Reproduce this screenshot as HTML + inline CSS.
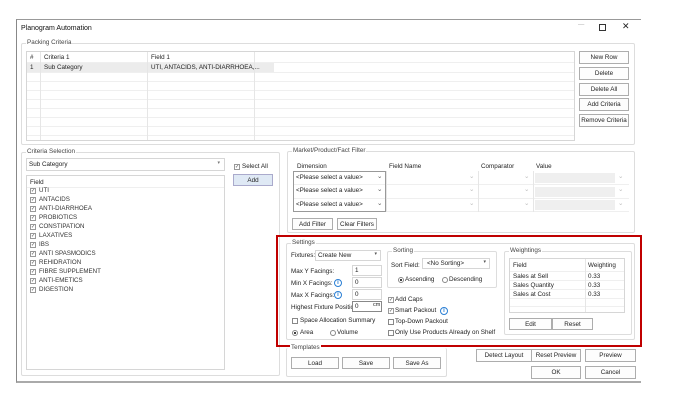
<!DOCTYPE html>
<html><head><style>
*{margin:0;padding:0;box-sizing:border-box}
body{width:675px;height:403px;background:#fff;position:relative;overflow:hidden;font-family:"Liberation Sans",sans-serif;font-size:6.3px;color:#222}
div,span{position:absolute}
.win{left:16px;top:19px;width:625px;height:364px;border-left:1px solid #888;border-top:1px solid #999;border-bottom:2px solid #aaa;background:#fff}
.grp{border:1px solid #ddd;border-radius:2px}
.lg{background:#fff;padding:0 1px;color:#444;top:-5px;left:4px;white-space:nowrap}
.btn{border:1px solid #adadad;background:#fdfdfd;text-align:center;line-height:11px;white-space:nowrap}
.box{border:1px solid #d6d6d6;background:#fff}
.hl{left:0;right:0;height:1px;background:#efefef}
.vl{top:0;bottom:0;width:1px;background:#e6e6e6}
.cb{width:6px;height:6px;border:1px solid #888;background:#fff}
.ck{width:6px;height:6px;border:1px solid #999;background:#fff;font-size:5px;line-height:4px;text-align:center;color:#444}
.rd{width:6px;height:6px;border:1px solid #888;border-radius:50%;background:#fff}
.i{width:8px;height:8px;border:1px solid #2a7fd4;border-radius:50%;color:#2a7fd4;font-size:6px;text-align:center;line-height:6px;font-weight:bold}
.t{white-space:nowrap}
</style></head><body>
<div class="win"></div>
<span class="t" style="left:21px;top:25px;font-size:7px;color:#111">Planogram Automation</span>
<span class="t" style="left:578px;top:21px;color:#aaa">—</span>
<div style="left:599px;top:24px;width:7px;height:7px;border:1px solid #333"></div>
<span class="t" style="left:622px;top:21px;font-size:9px">✕</span>

<!-- Packing criteria -->
<div class="grp" style="left:21px;top:43px;width:614px;height:102px"><span class="lg">Packing Criteria</span></div>
<div class="box" style="left:26px;top:51px;width:549px;height:90px">
 <div class="hl" style="top:10px"></div><div style="left:0;top:11px;width:247px;height:9px;background:#ececec"></div>
 <div class="hl" style="top:20px"></div><div class="hl" style="top:29px"></div><div class="hl" style="top:38px"></div><div class="hl" style="top:47px"></div><div class="hl" style="top:56px"></div><div class="hl" style="top:65px"></div><div class="hl" style="top:74px"></div><div class="hl" style="top:83px"></div>
 <div class="vl" style="left:13px"></div><div class="vl" style="left:120px"></div><div class="vl" style="left:227px"></div>
 <span class="t" style="left:3px;top:2px">#</span><span class="t" style="left:17px;top:2px">Criteria 1</span><span class="t" style="left:124px;top:2px">Field 1</span>
 <span class="t" style="left:3px;top:12px">1</span><span class="t" style="left:17px;top:12px">Sub Category</span><span class="t" style="left:124px;top:12px">UTI, ANTACIDS, ANTI-DIARRHOEA,...</span>
</div>
<div class="btn" style="left:579px;top:51px;width:50px;height:13px">New Row</div>
<div class="btn" style="left:579px;top:67px;width:50px;height:13px">Delete</div>
<div class="btn" style="left:579px;top:83px;width:50px;height:13px">Delete All</div>
<div class="btn" style="left:579px;top:98px;width:50px;height:13px">Add Criteria</div>
<div class="btn" style="left:579px;top:114px;width:50px;height:13px">Remove Criteria</div>

<!-- Criteria selection -->
<div class="grp" style="left:21px;top:152px;width:259px;height:224px"><span class="lg">Criteria Selection</span></div>
<div class="box" style="left:26px;top:158px;width:199px;height:13px"><span class="t" style="left:2px;top:2px">Sub Category</span><span style="right:4px;top:1px;color:#777;font-size:5px">▾</span></div>
<div class="ck" style="left:234px;top:164px">✓</div><span class="t" style="left:242px;top:163px">Select All</span>
<div class="btn" style="left:233px;top:174px;width:40px;height:12px;background:#dfe9f5;border-color:#aac">Add</div>
<div class="box" style="left:26px;top:175px;width:199px;height:195px">
 <span class="t" style="left:3px;top:3px">Field</span><div class="hl" style="top:11px"></div>
</div>
<div style="left:29px;top:187px;width:180px;height:110px;font-size:6.2px;color:#333">
<div class="ck" style="left:1px;top:1px">✓</div><span class="t" style="left:10px;top:0">UTI</span>
<div class="ck" style="left:1px;top:10px">✓</div><span class="t" style="left:10px;top:9px">ANTACIDS</span>
<div class="ck" style="left:1px;top:19px">✓</div><span class="t" style="left:10px;top:18px">ANTI-DIARRHOEA</span>
<div class="ck" style="left:1px;top:28px">✓</div><span class="t" style="left:10px;top:27px">PROBIOTICS</span>
<div class="ck" style="left:1px;top:37px">✓</div><span class="t" style="left:10px;top:36px">CONSTIPATION</span>
<div class="ck" style="left:1px;top:46px">✓</div><span class="t" style="left:10px;top:45px">LAXATIVES</span>
<div class="ck" style="left:1px;top:55px">✓</div><span class="t" style="left:10px;top:54px">IBS</span>
<div class="ck" style="left:1px;top:64px">✓</div><span class="t" style="left:10px;top:63px">ANTI SPASMODICS</span>
<div class="ck" style="left:1px;top:73px">✓</div><span class="t" style="left:10px;top:72px">REHIDRATION</span>
<div class="ck" style="left:1px;top:82px">✓</div><span class="t" style="left:10px;top:81px">FIBRE SUPPLEMENT</span>
<div class="ck" style="left:1px;top:91px">✓</div><span class="t" style="left:10px;top:90px">ANTI-EMETICS</span>
<div class="ck" style="left:1px;top:100px">✓</div><span class="t" style="left:10px;top:99px">DIGESTION</span>
</div>

<!-- Market filter -->
<div class="grp" style="left:287px;top:151px;width:348px;height:82px"><span class="lg">Market/Product/Fact Filter</span></div>
<span class="t" style="left:297px;top:163px">Dimension</span><span class="t" style="left:389px;top:163px">Field Name</span><span class="t" style="left:481px;top:163px">Comparator</span><span class="t" style="left:536px;top:163px">Value</span>
<div style="left:293px;top:171px;width:336px;height:41px;background:#fff">
 <div class="hl" style="top:13px"></div><div class="hl" style="top:27px"></div><div class="hl" style="top:40px"></div>
 <div style="left:0;top:0;width:93px;height:41px;border:1px solid #999"></div>
 <div class="vl" style="left:93px"></div><div class="vl" style="left:185px"></div><div class="vl" style="left:240px"></div>
 <div style="left:242px;top:2px;width:80px;height:10px;background:#efefef"></div><div style="left:242px;top:16px;width:80px;height:10px;background:#efefef"></div><div style="left:242px;top:29px;width:80px;height:10px;background:#efefef"></div>
 <span class="t" style="left:3px;top:3px">&lt;Please select a value&gt;</span><span class="t" style="left:3px;top:16px">&lt;Please select a value&gt;</span><span class="t" style="left:3px;top:30px">&lt;Please select a value&gt;</span>
 <span style="left:84px;top:2px;color:#555">⌄</span><span style="left:84px;top:15px;color:#555">⌄</span><span style="left:84px;top:29px;color:#555">⌄</span>
 <span style="left:176px;top:2px;color:#bbb">⌄</span><span style="left:176px;top:15px;color:#bbb">⌄</span><span style="left:176px;top:29px;color:#bbb">⌄</span>
 <span style="left:231px;top:2px;color:#bbb">⌄</span><span style="left:231px;top:15px;color:#bbb">⌄</span><span style="left:231px;top:29px;color:#bbb">⌄</span>
 <span style="left:325px;top:2px;color:#bbb">⌄</span><span style="left:325px;top:15px;color:#bbb">⌄</span><span style="left:325px;top:29px;color:#bbb">⌄</span>
</div>
<div class="btn" style="left:292px;top:218px;width:41px;height:12px">Add Filter</div>
<div class="btn" style="left:337px;top:218px;width:40px;height:12px">Clear Filters</div>

<!-- Settings -->
<div class="grp" style="left:286px;top:243px;width:349px;height:97px"><span class="lg">Settings</span></div>
<span class="t" style="left:291px;top:252px">Fixtures:</span>
<div class="box" style="left:315px;top:250px;width:66px;height:11px"><span class="t" style="left:2px;top:1px">Create New</span><span style="right:3px;top:0;font-size:5px;color:#555">▾</span></div>
<span class="t" style="left:291px;top:268px">Max Y Facings:</span><div class="box" style="left:352px;top:265px;width:30px;height:11px"><span style="left:2px;top:1px">1</span></div>
<span class="t" style="left:291px;top:280px">Min X Facings:</span><div class="i" style="left:334px;top:279px">i</div><div class="box" style="left:352px;top:277px;width:30px;height:11px"><span style="left:2px;top:1px">0</span></div>
<span class="t" style="left:291px;top:292px">Max X Facings:</span><div class="i" style="left:334px;top:291px">i</div><div class="box" style="left:352px;top:289px;width:30px;height:11px"><span style="left:2px;top:1px">0</span></div>
<span class="t" style="left:291px;top:304px">Highest Fixture Position:</span><div class="box" style="left:352px;top:301px;width:30px;height:11px;border-color:#888"><span style="left:2px;top:1px">0</span><span style="left:20px;top:0;font-size:5.5px">cm</span></div>
<div class="cb" style="left:292px;top:318px"></div><span class="t" style="left:300px;top:317px">Space Allocation Summary</span>
<div class="rd" style="left:292px;top:330px;background:radial-gradient(#333 35%,#fff 45%)"></div><span class="t" style="left:300px;top:329px">Area</span>
<div class="rd" style="left:330px;top:330px"></div><span class="t" style="left:337px;top:329px">Volume</span>

<div class="grp" style="left:387px;top:251px;width:110px;height:37px"><span class="lg">Sorting</span></div>
<span class="t" style="left:391px;top:262px">Sort Field:</span>
<div class="box" style="left:422px;top:258px;width:68px;height:11px"><span class="t" style="left:4px;top:1px">&lt;No Sorting&gt;</span><span style="right:3px;top:0;font-size:5px;color:#555">▾</span></div>
<div class="rd" style="left:398px;top:277px;background:radial-gradient(#333 35%,#fff 45%)"></div><span class="t" style="left:405px;top:276px">Ascending</span>
<div class="rd" style="left:442px;top:277px"></div><span class="t" style="left:449px;top:276px">Descending</span>

<div class="ck" style="left:388px;top:297px">✓</div><span class="t" style="left:395px;top:296px">Add Caps</span>
<div class="ck" style="left:388px;top:308px">✓</div><span class="t" style="left:395px;top:307px">Smart Packout</span><div class="i" style="left:440px;top:307px">i</div>
<div class="cb" style="left:388px;top:319px"></div><span class="t" style="left:395px;top:318px">Top-Down Packout</span>
<div class="cb" style="left:388px;top:330px"></div><span class="t" style="left:395px;top:329px">Only Use Products Already on Shelf</span>

<div class="grp" style="left:504px;top:251px;width:128px;height:84px"><span class="lg">Weightings</span></div>
<div class="box" style="left:509px;top:258px;width:116px;height:55px">
 <div class="hl" style="top:12px"></div><div class="hl" style="top:21px"></div><div class="hl" style="top:30px"></div><div class="hl" style="top:39px"></div><div class="hl" style="top:47px"></div>
 <div class="vl" style="left:75px"></div>
 <span class="t" style="left:3px;top:3px">Field</span><span class="t" style="left:78px;top:3px">Weighting</span>
 <span class="t" style="left:3px;top:14px">Sales at Sell</span><span class="t" style="left:78px;top:14px">0.33</span>
 <span class="t" style="left:3px;top:23px">Sales Quantity</span><span class="t" style="left:78px;top:23px">0.33</span>
 <span class="t" style="left:3px;top:32px">Sales at Cost</span><span class="t" style="left:78px;top:32px">0.33</span>
</div>
<div class="btn" style="left:509px;top:318px;width:43px;height:12px">Edit</div>
<div class="btn" style="left:552px;top:318px;width:41px;height:12px">Reset</div>

<div style="left:276px;top:235px;width:366px;height:112px;border:2.5px solid #c00000"></div>

<!-- Templates -->
<div class="grp" style="left:286px;top:348px;width:161px;height:29px;border-top:none"><span class="lg" style="top:-4px;left:3px">Templates</span></div>
<div class="btn" style="left:291px;top:357px;width:48px;height:12px">Load</div>
<div class="btn" style="left:342px;top:357px;width:48px;height:12px">Save</div>
<div class="btn" style="left:393px;top:357px;width:48px;height:12px">Save As</div>
<div class="btn" style="left:476px;top:349px;width:56px;height:13px">Detect Layout</div>
<div class="btn" style="left:531px;top:349px;width:50px;height:13px">Reset Preview</div>
<div class="btn" style="left:585px;top:349px;width:51px;height:13px">Preview</div>
<div class="btn" style="left:531px;top:366px;width:50px;height:13px">OK</div>
<div class="btn" style="left:585px;top:366px;width:51px;height:13px">Cancel</div>
</body></html>
